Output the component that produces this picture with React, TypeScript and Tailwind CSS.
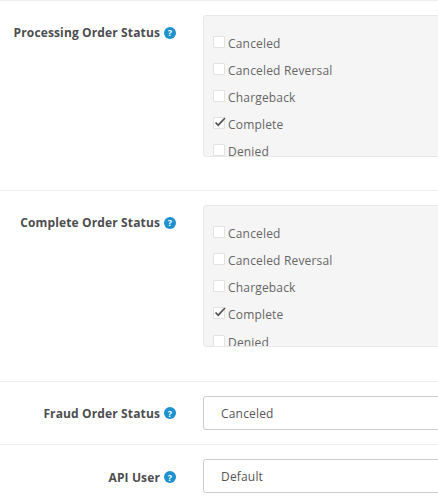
const statuses = ["Canceled", "Canceled Reversal", "Chargeback", "Complete", "Denied"];

function Help() {
  return (
    <span className="ml-[4px] inline-flex h-[12px] w-[12px] items-center justify-center rounded-full bg-[#1e91cf] text-[9px] font-bold leading-none tracking-normal text-white">
      ?
    </span>
  );
}

function Label({ text }: { text: string }) {
  return (
    <label className="flex w-[176px] shrink-0 items-center justify-end text-[12px] font-bold leading-[17px] tracking-[0.13px] text-[#4c4d4f]">
      {text}
      <Help />
    </label>
  );
}

function CheckRow({ name }: { name: string }) {
  return (
    <div className="flex h-[27.1px] shrink-0 items-start">
      <span className="relative mt-[1px] h-[12px] w-[12px] shrink-0 rounded-[1px] border border-[#e2e2e2] bg-white">
        {name === "Complete" && (
          <svg viewBox="0 0 12 12" className="absolute left-[0px] top-[-2px] h-[12px] w-[12px]">
            <path d="M1.5 6.5 L4.2 9.2 L11 2" fill="none" stroke="#555" strokeWidth="1.7" />
          </svg>
        )}
      </span>
      <span className="ml-[3px] text-[12px] leading-[17px] tracking-[0.18px] text-[#666]">{name}</span>
    </div>
  );
}

function StatusRow({ label, height }: { label: string; height: string }) {
  return (
    <div className={`flex ${height} border-t border-[#ededed] pt-[14px]`}>
      <div className="h-[34px] pt-[9px]">
        <Label text={label} />
      </div>
      <div className="ml-[27px] flex h-[142px] w-[320px] shrink-0 flex-col overflow-hidden rounded-[3px] border border-[#e8e8e8] bg-[#f5f5f5] pl-[9px] pt-[19px]">
        {statuses.map((s) => (
          <CheckRow key={s} name={s} />
        ))}
      </div>
    </div>
  );
}

function SelectBox({ value }: { value: string }) {
  return (
    <div className="ml-[27px] flex h-[34px] w-[320px] shrink-0 items-center rounded-[3px] border border-[#ccc] bg-white pl-[17px] pt-[2px] text-[12px] tracking-[0.18px] text-[#555]">
      {value}
    </div>
  );
}

export default function App() {
  return (
    <div className="h-[500px] w-[438px] overflow-hidden bg-white font-['Open_Sans',sans-serif]">
      <StatusRow label="Processing Order Status" height="h-[190.15px]" />
      <StatusRow label="Complete Order Status" height="h-[190.45px]" />
      <div className="flex h-[63.6px] border-t border-[#ededed] pt-[14.6px]">
        <div className="flex h-[34px] items-center">
          <Label text="Fraud Order Status" />
        </div>
        <SelectBox value="Canceled" />
      </div>
      <div className="flex h-[56px] border-t border-[#ededed] pt-[14.25px]">
        <div className="flex h-[34px] items-center pt-[2px]">
          <Label text="API User" />
        </div>
        <SelectBox value="Default" />
      </div>
    </div>
  );
}
